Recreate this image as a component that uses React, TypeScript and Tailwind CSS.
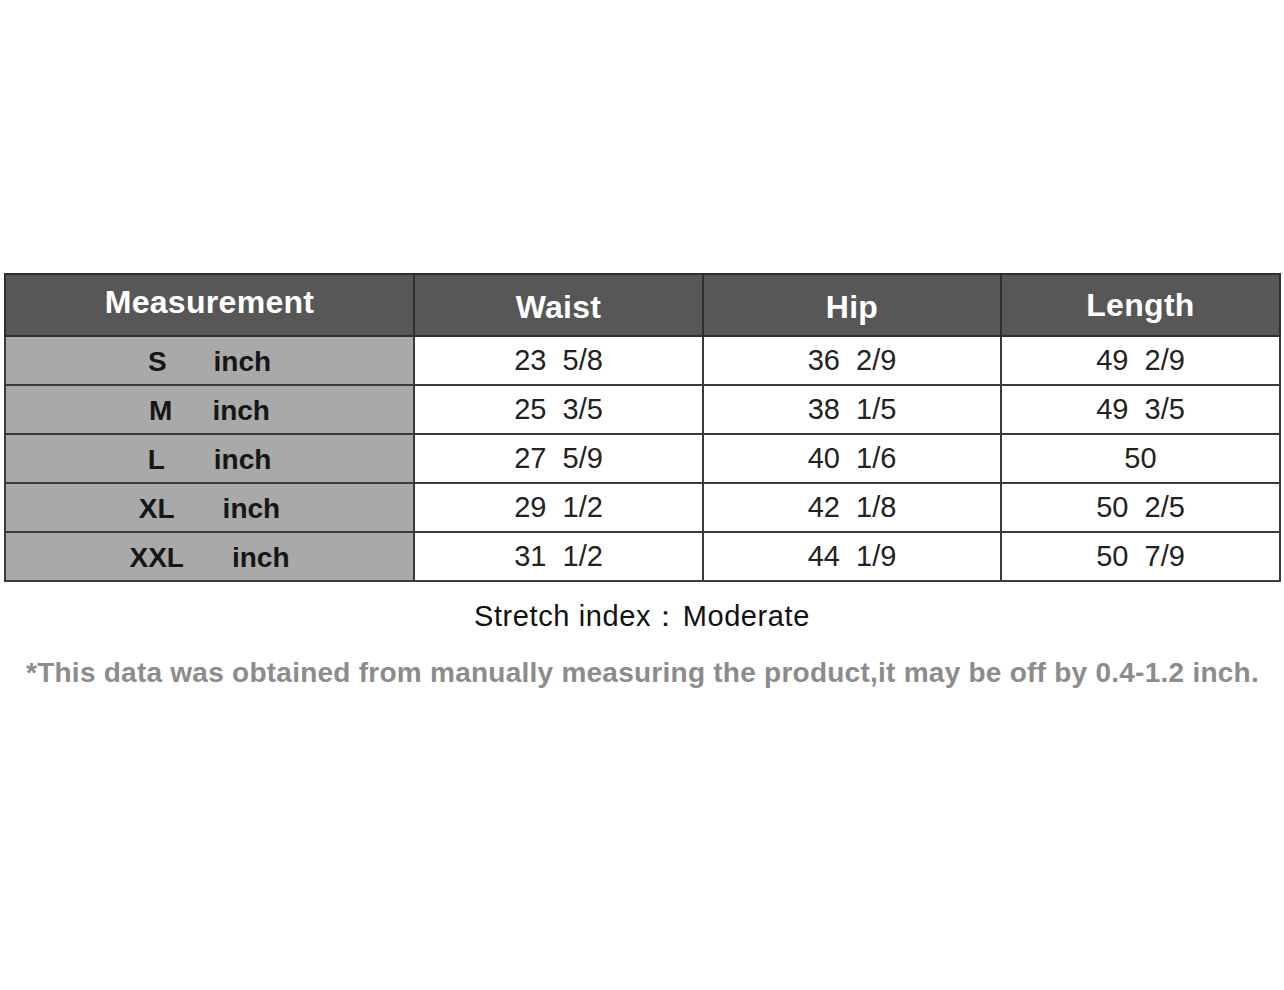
import React from "react";

const rows = [
  { size: "S", gap: "gap-[47px]", w: "23  5/8", h: "36  2/9", l: "49  2/9" },
  { size: "M", gap: "gap-[40px]", w: "25  3/5", h: "38  1/5", l: "49  3/5" },
  { size: "L", gap: "gap-[49px]", w: "27  5/9", h: "40  1/6", l: "50" },
  { size: "XL", gap: "gap-[48px]", w: "29  1/2", h: "42  1/8", l: "50  2/5" },
  { size: "XXL", gap: "gap-[48px]", w: "31  1/2", h: "44  1/9", l: "50  7/9" },
];

export default function App() {
  return (
    <div
      className="w-[1284px] h-[990px] bg-white pt-[273px] pl-[4px]"
      style={{ fontFamily: '"Liberation Sans", Arial, sans-serif' }}
    >
      <table className="border-collapse border-2 border-[#3a3a3a]">
        <colgroup>
          <col className="w-[409px]" />
          <col className="w-[289px]" />
          <col className="w-[298px]" />
          <col className="w-[279px]" />
        </colgroup>
        <thead>
          <tr className="h-[62px] bg-[#575757] text-white font-bold">
            <th className="border-2 border-[#2e2e2e] text-[32px] tracking-[0.3px] p-0 align-middle pb-[6px]">Measurement</th>
            <th className="border-2 border-[#2e2e2e] text-[32px] tracking-[0.3px] p-0 align-middle pt-[4px]">Waist</th>
            <th className="border-2 border-[#2e2e2e] text-[32px] tracking-[0.3px] p-0 align-middle pt-[4px]">Hip</th>
            <th className="border-2 border-[#2e2e2e] text-[32px] tracking-[0.3px] p-0 align-middle">Length</th>
          </tr>
        </thead>
        <tbody>
          {rows.map((r) => (
            <tr key={r.size} className="h-[49px]">
              <td className="border-2 border-[#3a3a3a] bg-[#a9a9a9] p-0 pt-[3px]">
                <div className={`flex justify-center items-center ${r.gap} text-[28px] font-bold text-[#161616]`}>
                  <span>{r.size}</span>
                  <span>inch</span>
                </div>
              </td>
              <td className="border-2 border-[#3a3a3a] p-0 text-center text-[29px] text-[#222] whitespace-pre">{r.w}</td>
              <td className="border-2 border-[#3a3a3a] p-0 text-center text-[29px] text-[#222] whitespace-pre">{r.h}</td>
              <td className="border-2 border-[#3a3a3a] p-0 text-center text-[29px] text-[#222] whitespace-pre">{r.l}</td>
            </tr>
          ))}
        </tbody>
      </table>
      <div className="w-[1276px] flex justify-center text-[29px] tracking-[0.6px] text-[#111] mt-[17px] leading-[34px]">
        <span>Stretch index：</span>
        <span className="ml-[2px]">Moderate</span>
      </div>
      <div className="w-[1284px] pl-[22px] text-[28px] tracking-[0.25px] font-bold text-[#8c8c8c] mt-[23px] leading-[34px] whitespace-nowrap">
        *This data was obtained from manually measuring the product,it may be off by 0.4-1.2 inch.
      </div>
    </div>
  );
}
